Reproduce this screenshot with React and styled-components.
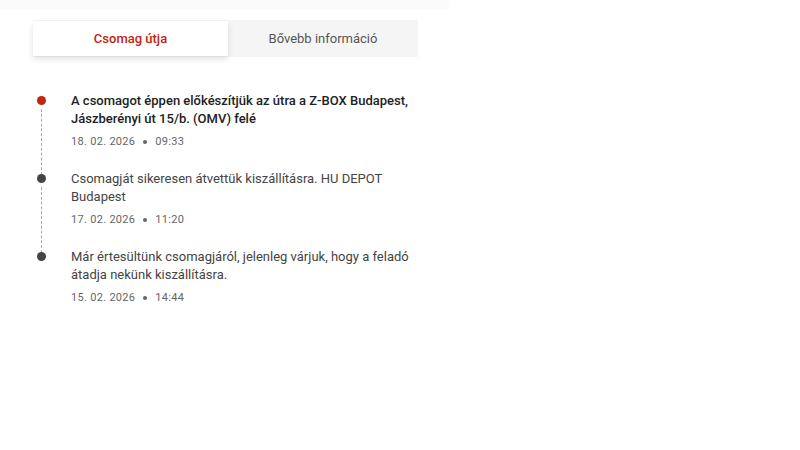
import React, { useState } from "react";
import styled, { createGlobalStyle } from "styled-components";

const Global = createGlobalStyle`
  html, body { margin: 0; padding: 0; background: #fff; }
  body { font-family: Roboto, "Noto Sans", Arial, sans-serif; }
`;

const TopStrip = styled.div`
  width: 450px;
  height: 10px;
  background: #fbfbfb;
`;

const Panel = styled.div`
  width: 385px;
  margin: 10px 0 0 33px;
`;

const Tabs = styled.div`
  display: grid;
  grid-template-columns: 195px 1fr;
  height: 37px;
  background: #f5f5f5;
`;

const Tab = styled.button`
  border: 0;
  margin: 0;
  padding: 0;
  font-family: Roboto, Arial, sans-serif;
  font-size: 13px;
  font-weight: ${(p) => (p.$active ? 500 : 400)};
  color: ${(p) => (p.$active ? "#c4230f" : "#555")};
  background: ${(p) => (p.$active ? "#fff" : "transparent")};
  box-shadow: ${(p) => (p.$active ? "0 3px 6px rgba(0,0,0,0.12)" : "none")};
  height: ${(p) => (p.$active ? "35px" : "37px")};
  margin-top: ${(p) => (p.$active ? "1px" : "0")};
  cursor: pointer;
`;

const Timeline = styled.ol`
  list-style: none;
  margin: 35px 0 0;
  padding: 0;
`;

const Item = styled.li`
  position: relative;
  padding: 0 0 20px 38px;
  &:last-child { padding-bottom: 0; }
`;

const Dot = styled.span`
  position: absolute;
  left: 4px;
  top: 4px;
  width: 9px;
  height: 9px;
  border-radius: 50%;
  background: ${(p) => (p.$active ? "#c4230f" : "#444")};
`;

const Connector = styled.span`
  position: absolute;
  left: 8px;
  top: 17px;
  bottom: -5px;
  border-left: 1px dashed #a8a8a8;
`;

const Title = styled.div`
  font-size: 13px;
  line-height: 18px;
  font-weight: ${(p) => (p.$active ? 500 : 400)};
  color: ${(p) => (p.$active ? "#222" : "#444")};
`;

const Meta = styled.div`
  margin-top: 6px;
  font-size: 11px;
  line-height: 16px;
  color: #666;
  letter-spacing: 0.3px;
  display: flex;
  align-items: center;
  gap: 8px;
`;

const Sep = styled.span`
  width: 4px;
  height: 4px;
  border-radius: 50%;
  background: #666;
`;

const events = [
  {
    text: "A csomagot éppen előkészítjük az útra a Z-BOX Budapest, Jászberényi út 15/b. (OMV) felé",
    date: "18. 02. 2026",
    time: "09:33",
    active: true,
  },
  {
    text: "Csomagját sikeresen átvettük kiszállításra. HU DEPOT Budapest",
    date: "17. 02. 2026",
    time: "11:20",
  },
  {
    text: "Már értesültünk csomagjáról, jelenleg várjuk, hogy a feladó átadja nekünk kiszállításra.",
    date: "15. 02. 2026",
    time: "14:44",
  },
];

export default function App() {
  const [tab, setTab] = useState(0);
  return (
    <>
      <Global />
      <TopStrip />
      <Panel>
        <Tabs>
          <Tab $active={tab === 0} onClick={() => setTab(0)}>Csomag útja</Tab>
          <Tab $active={tab === 1} onClick={() => setTab(1)}>Bővebb információ</Tab>
        </Tabs>
        <Timeline>
          {events.map((e, i) => (
            <Item key={i}>
              <Dot $active={e.active} />
              {i < events.length - 1 && <Connector />}
              <Title $active={e.active}>{e.text}</Title>
              <Meta>
                <span>{e.date}</span>
                <Sep />
                <span>{e.time}</span>
              </Meta>
            </Item>
          ))}
        </Timeline>
      </Panel>
    </>
  );
}
